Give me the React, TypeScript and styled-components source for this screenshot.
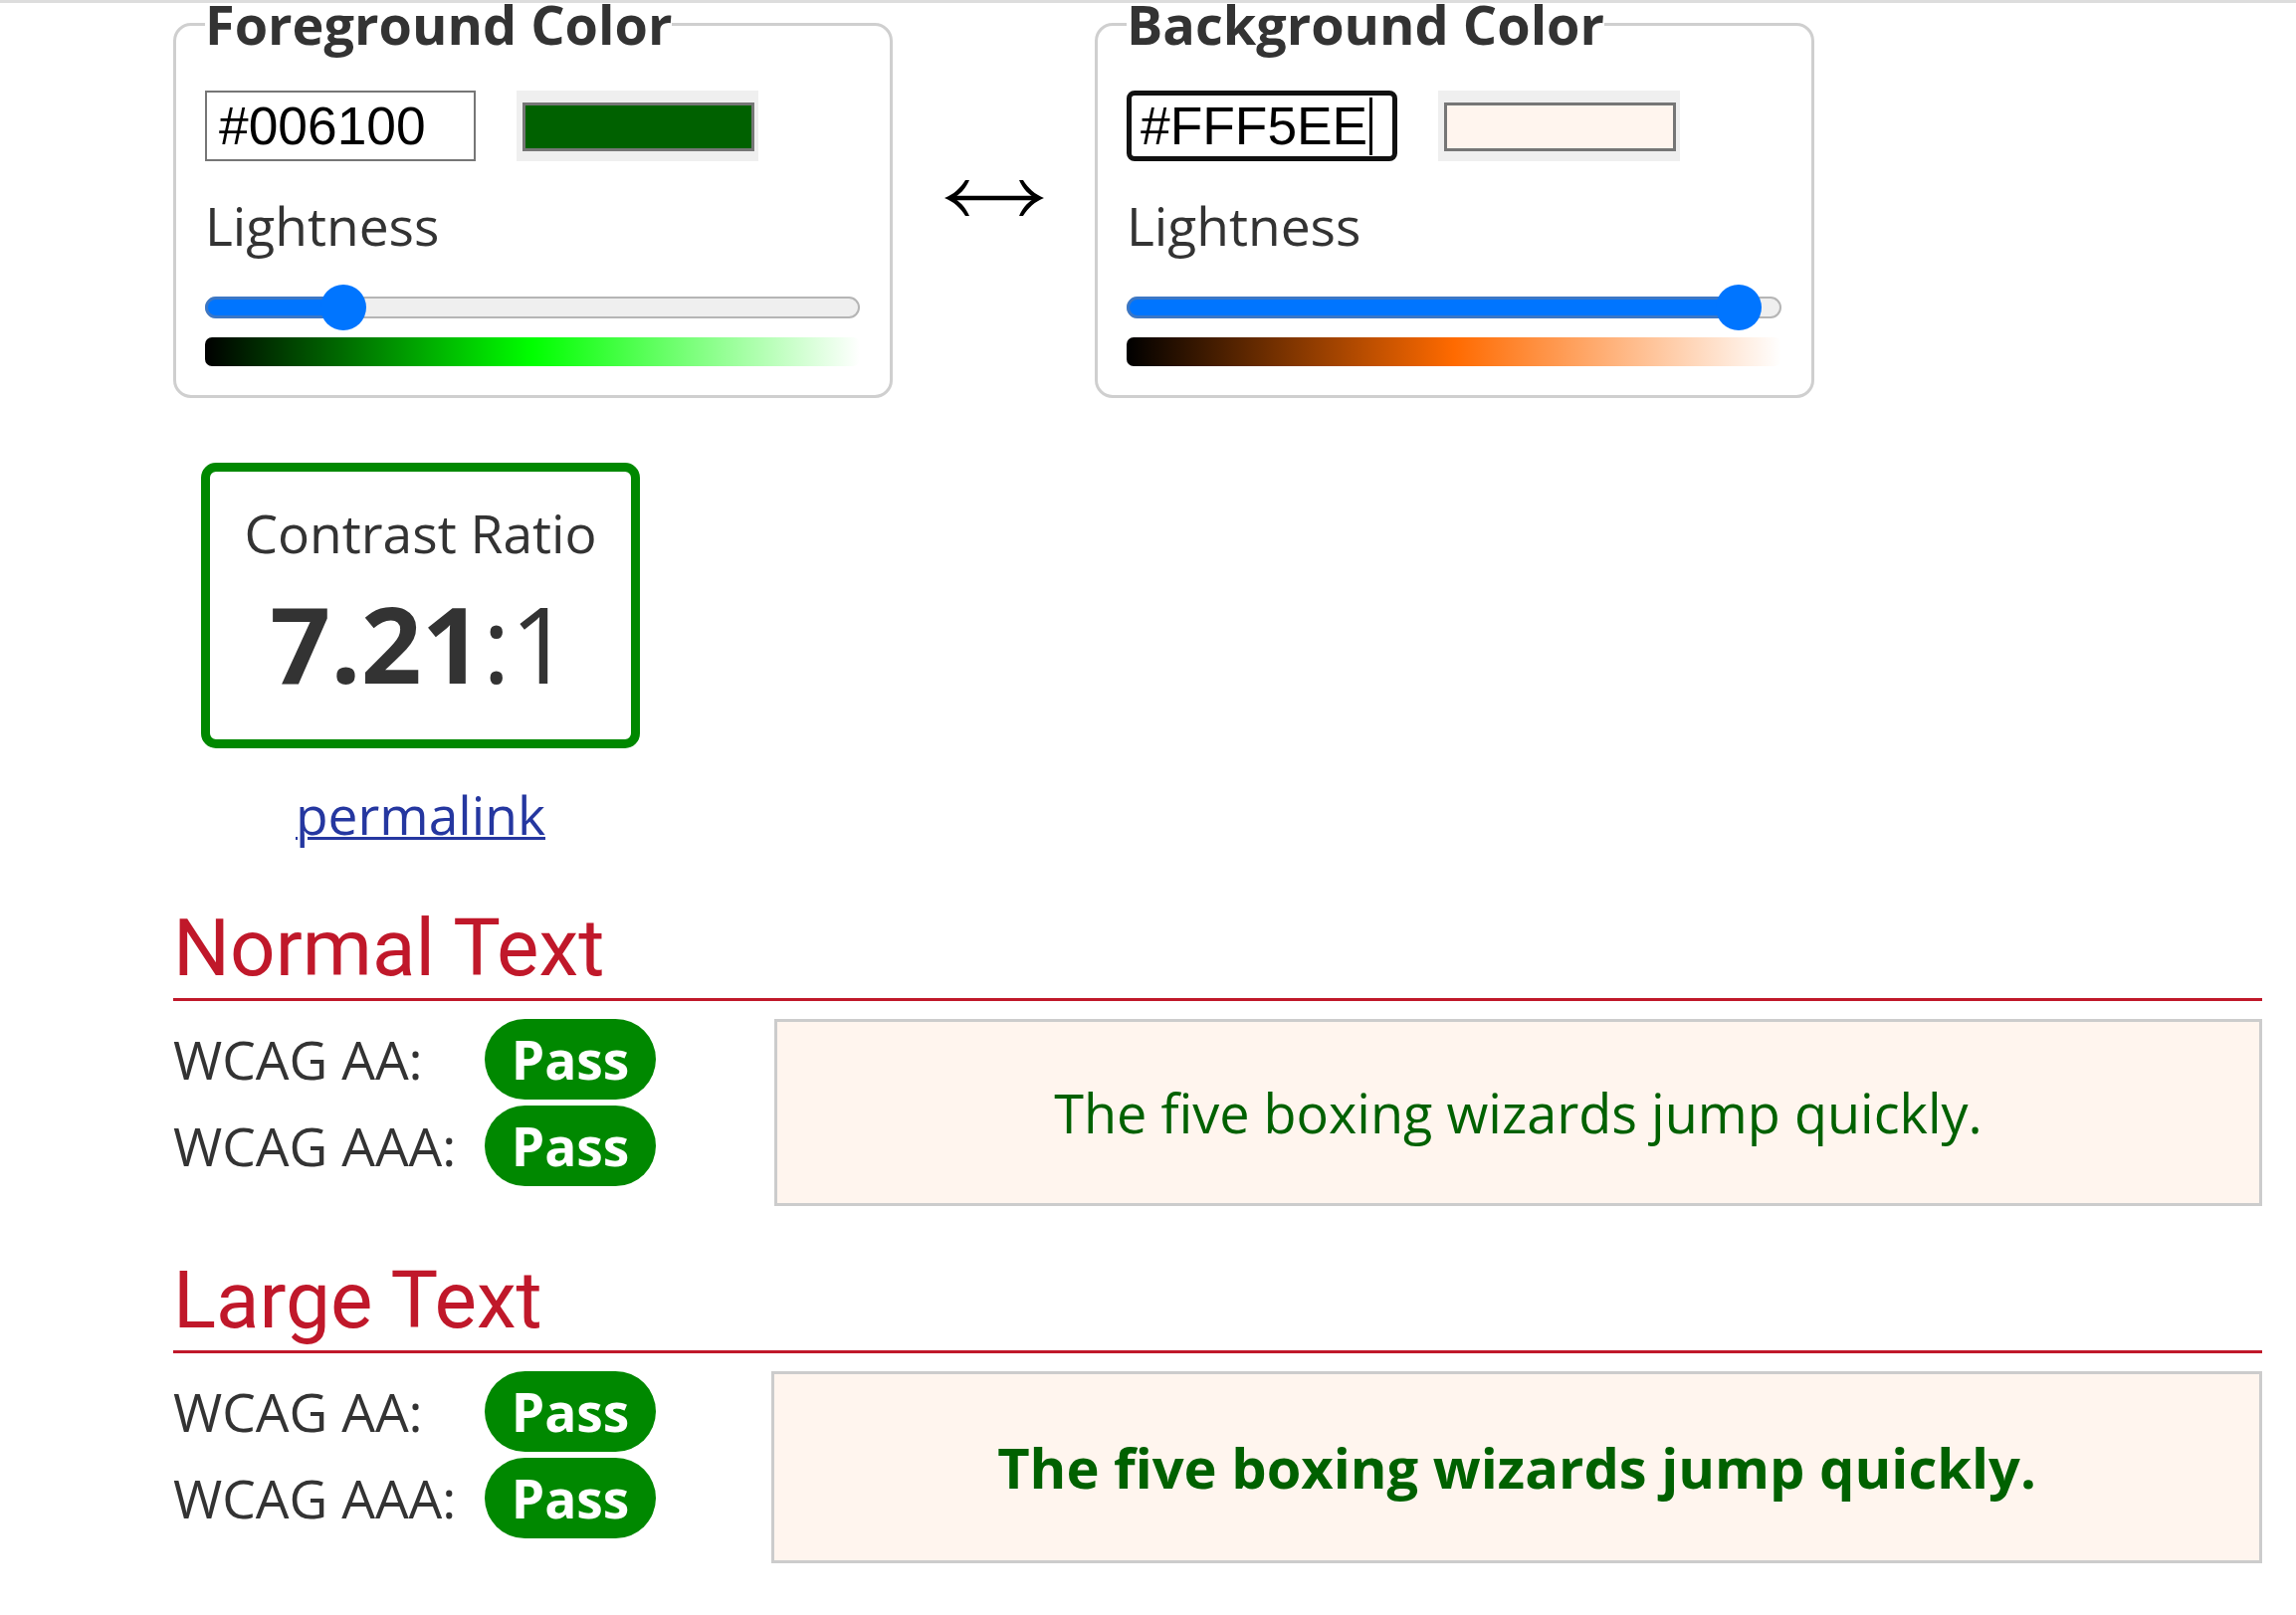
import React from "react";
import styled, { createGlobalStyle } from "styled-components";

const GlobalStyle = createGlobalStyle`
  html, body {
    margin: 0;
    padding: 0;
    background: #ffffff;
  }
  body {
    font-family: "Open Sans", "Noto Sans", sans-serif;
    color: #333333;
    overflow: hidden;
  }
  * {
    box-sizing: border-box;
  }
`;

const BASE = "53.33px";

const Page = styled.div`
  border-top: 3px solid #dddddd;
  height: 1623px;
  overflow: hidden;
`;

const Main = styled.main`
  width: 2099px;
  margin: -13px 0 0 174px;
`;

const ColorRow = styled.div`
  display: flex;
  align-items: flex-start;
`;

const ColorFieldset = styled.fieldset`
  width: 723px;
  margin: 0;
  padding: 0 30px 29px 29px;
  border: 3px solid #cfcfcf;
  border-radius: 18px;
  min-width: 0;
`;

const Legend = styled.legend`
  padding: 0;
  font-size: 54px;
  line-height: 68px;
  font-weight: 700;
  color: #333333;
`;

const HexRow = styled.div`
  display: flex;
  align-items: center;
  gap: 41px;
  margin-top: 33px;
`;

const HexField = styled.div<{ focused?: boolean }>`
  width: 272px;
  height: 71px;
  display: flex;
  align-items: center;
  font-family: "Liberation Sans", Arial, sans-serif;
  font-size: ${BASE};
  color: #000000;
  background: #ffffff;
  border: ${({ focused }) => (focused ? "5px solid #111111" : "2px solid #767676")};
  border-radius: ${({ focused }) => (focused ? "8px" : "0")};
  padding: ${({ focused }) => (focused ? "0 9px" : "0 12px")};
  white-space: nowrap;
`;

const Caret = styled.span`
  display: inline-block;
  width: 3px;
  height: 58px;
  margin-left: 2px;
  background: #000000;
`;

const SwatchButton = styled.div`
  width: 243px;
  height: 71px;
  padding: 12px 4px 10px 6px;
  background: #efefef;
`;

const SwatchInner = styled.div<{ color: string }>`
  height: 100%;
  border: 3px solid #767676;
  background: ${({ color }) => color};
`;

const FieldLabel = styled.div`
  margin-top: 29px;
  font-size: ${BASE};
  line-height: 72px;
  color: #333333;
`;

const Track = styled.div`
  position: relative;
  margin-top: 35px;
  height: 22px;
  border: 2px solid #b5b5b5;
  border-radius: 11px;
  background: #efefef;
`;

const TrackFill = styled.div`
  position: absolute;
  top: -2px;
  bottom: -2px;
  left: -2px;
  border: 3px solid #3b77c6;
  border-radius: 11px;
  background: #0075ff;
`;

const Thumb = styled.div`
  position: absolute;
  top: 50%;
  width: 46px;
  height: 46px;
  margin-top: -23px;
  margin-left: -2px;
  border-radius: 50%;
  background: #0075ff;
`;

const GradientBar = styled.div<{ hue: number }>`
  margin-top: 19px;
  height: 29px;
  border-radius: 7px;
  background: linear-gradient(
    to right,
    hsl(${({ hue }) => hue}, 100%, 0%),
    hsl(${({ hue }) => hue}, 100%, 50%),
    hsl(${({ hue }) => hue}, 100%, 100%)
  );
`;

const SwapZone = styled.div`
  width: 203px;
  padding-top: 191px;
  display: flex;
  justify-content: center;
`;

const SwapButton = styled.button`
  border: none;
  background: none;
  padding: 0;
  display: block;
  cursor: pointer;
`;

const ResultColumn = styled.div`
  width: 441px;
  margin: 65px 0 0 28px;
  padding-bottom: 3px;
  text-align: center;
`;

const RatioBox = styled.div`
  border: 9px solid #008800;
  border-radius: 15px;
  padding: 26px 0 24px;
`;

const RatioLabel = styled.div`
  font-size: ${BASE};
  line-height: 72px;
`;

const RatioValue = styled.div`
  font-size: 106.67px;
  line-height: 147px;
  color: #333333;
  b {
    font-weight: 700;
  }
`;

const Permalink = styled.a`
  display: inline-block;
  margin-top: 31px;
  font-size: ${BASE};
  line-height: 72px;
  color: #2537a0;
  text-decoration: underline;
  text-decoration-thickness: 3px;
`;

const SectionHeading = styled.h2`
  margin: 47px 0 0;
  padding-bottom: 2px;
  font-family: Roboto, "Liberation Sans", sans-serif;
  font-size: 80px;
  font-weight: 400;
  line-height: 96px;
  color: #c0182a;
  border-bottom: 3px solid #c0182a;
`;

const ResultRow = styled.div`
  display: flex;
  align-items: flex-start;
  margin-top: 18px;
`;

const ChecksGrid = styled.div<{ large?: boolean }>`
  width: ${({ large }) => (large ? "601px" : "604px")};
  flex: none;
  display: grid;
  grid-template-columns: 313px 172px;
  row-gap: 6px;
  align-items: center;
`;

const CheckLabel = styled.div`
  font-size: ${BASE};
  line-height: 81px;
  color: #333333;
  white-space: nowrap;
`;

const PassBadge = styled.div`
  height: 81px;
  border-radius: 41px;
  background: #008800;
  color: #ffffff;
  font-size: ${BASE};
  font-weight: 700;
  line-height: 81px;
  text-align: center;
`;

const SampleBox = styled.div<{ large?: boolean }>`
  flex: 1;
  display: flex;
  align-items: center;
  justify-content: center;
  padding: 55px 20px;
  border: 3px solid #cccccc;
  background: #fff5ee;
  color: #006100;
  font-size: ${({ large }) => (large ? "56px" : "54px")};
  font-weight: ${({ large }) => (large ? 700 : 400)};
  line-height: ${({ large }) => (large ? "77px" : "72px")};
  white-space: nowrap;
`;

function hexToHsl(hex: string) {
  const n = parseInt(hex.slice(1), 16);
  const r = ((n >> 16) & 255) / 255;
  const g = ((n >> 8) & 255) / 255;
  const b = (n & 255) / 255;
  const max = Math.max(r, g, b);
  const min = Math.min(r, g, b);
  const l = (max + min) / 2;
  let h = 0;
  if (max !== min) {
    const d = max - min;
    if (max === r) h = ((g - b) / d) % 6;
    else if (max === g) h = (b - r) / d + 2;
    else h = (r - g) / d + 4;
    h *= 60;
    if (h < 0) h += 360;
  }
  return { h: Math.round(h), l };
}

const TRACK_WIDTH = 658;
const THUMB = 46;

function LightnessSlider({ lightness }: { lightness: number }) {
  const left = Math.round(lightness * (TRACK_WIDTH - THUMB));
  return (
    <Track>
      <TrackFill style={{ width: left + THUMB / 2 + 2 }} />
      <Thumb style={{ left }} />
    </Track>
  );
}

function ColorPicker({ title, hex, focused }: { title: string; hex: string; focused?: boolean }) {
  const { h, l } = hexToHsl(hex);
  return (
    <ColorFieldset>
      <Legend>{title}</Legend>
      <HexRow>
        <HexField focused={focused}>
          {hex}
          {focused && <Caret />}
        </HexField>
        <SwatchButton>
          <SwatchInner color={hex} />
        </SwatchButton>
      </HexRow>
      <FieldLabel>Lightness</FieldLabel>
      <LightnessSlider lightness={l} />
      <GradientBar hue={h} />
    </ColorFieldset>
  );
}

function SwapIcon() {
  return (
    <svg width="100" height="36" viewBox="0 0 100 36" aria-hidden="true">
      <path d="M6 18 H94" stroke="#000" strokeWidth="4.5" />
      <path d="M0 18 C9 14.5 16 8 21 0 L25 0 C21 9 15 15.5 8 18 C15 20.5 21 27 25 36 L21 36 C16 28 9 21.5 0 18 Z" fill="#000" />
      <path d="M100 18 C91 14.5 84 8 79 0 L75 0 C79 9 85 15.5 92 18 C85 20.5 79 27 75 36 L79 36 C84 28 91 21.5 100 18 Z" fill="#000" />
    </svg>
  );
}

function ResultSection({ title, large }: { title: string; large?: boolean }) {
  return (
    <>
      <SectionHeading>{title}</SectionHeading>
      <ResultRow>
        <ChecksGrid large={large}>
          <CheckLabel>WCAG AA:</CheckLabel>
          <PassBadge>Pass</PassBadge>
          <CheckLabel>WCAG AAA:</CheckLabel>
          <PassBadge>Pass</PassBadge>
        </ChecksGrid>
        <SampleBox large={large}>The five boxing wizards jump quickly.</SampleBox>
      </ResultRow>
    </>
  );
}

export default function App() {
  return (
    <Page>
      <GlobalStyle />
      <Main>
        <ColorRow>
          <ColorPicker title="Foreground Color" hex="#006100" />
          <SwapZone>
            <SwapButton aria-label="Swap colors">
              <SwapIcon />
            </SwapButton>
          </SwapZone>
          <ColorPicker title="Background Color" hex="#FFF5EE" focused />
        </ColorRow>
        <ResultColumn>
          <RatioBox>
            <RatioLabel>Contrast Ratio</RatioLabel>
            <RatioValue>
              <b>7.21</b>:1
            </RatioValue>
          </RatioBox>
          <Permalink href="#">permalink</Permalink>
        </ResultColumn>
        <ResultSection title="Normal Text" />
        <ResultSection title="Large Text" large />
      </Main>
    </Page>
  );
}
